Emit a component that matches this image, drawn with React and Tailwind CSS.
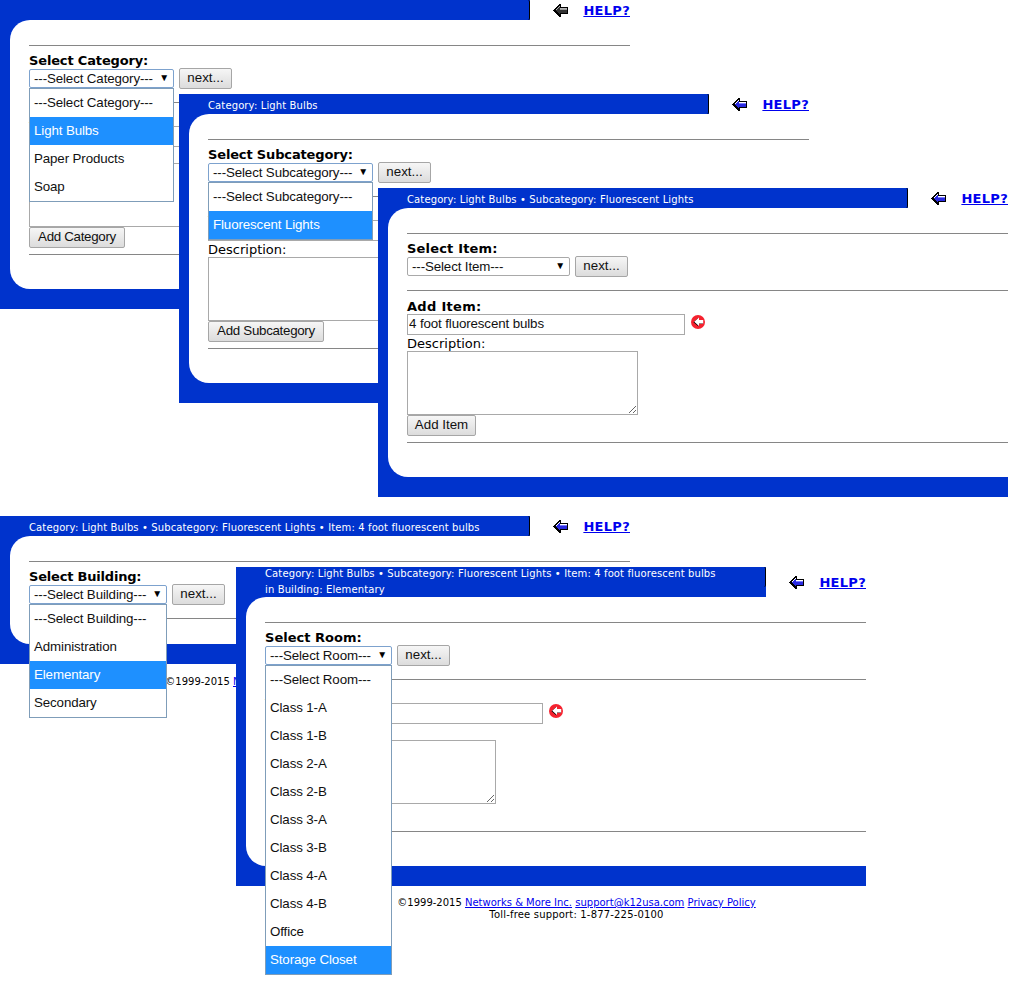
import React from "react";

const SANS = "font-['Liberation_Sans',Arial,sans-serif]";
const VERD = "font-['DejaVu_Sans',Verdana,sans-serif]";

function ArrowIcon({ active = true }) {
  const fill = active ? "#2b2be0" : "#333333";
  const light = active ? "#7a7aff" : "#9a9a9a";
  return (
    <svg width="15" height="13" viewBox="0 0 15 13" shapeRendering="crispEdges" className="shrink-0">
      <path d="M0 6.5 L6.5 0 H8 V3 H15 V10 H8 V13 H6.5 Z" fill="#000" />
      <path d="M1.5 6.5 L6.5 1.5 V4 H14 V5 H6 V3 L3 6 Z" fill="#fff" opacity={active ? 1 : 0.7} />
      <path d="M3 6.5 L6.5 3 V5 H14 V9 H7 V10.5 Z" fill={fill} />
      <path d="M7 5 H14 V6 H7 Z" fill={light} />
    </svg>
  );
}

function RedBack() {
  return (
    <svg width="14" height="14" viewBox="0 0 14 14" className="mt-px shrink-0">
      <circle cx="7" cy="7" r="7" fill="#f5222f" />
      <path d="M2.5 7.2 L7.5 2.8 V5.2 H12 V8.8 H7.5 V11.5 Z" fill="#000" />
      <path d="M3.2 6.8 L8 2.6 V5 H12.2 V8.6 H8 V11 Z" fill="#fff" />
    </svg>
  );
}

function Rule({ className = "" }) {
  return <div className={`h-px bg-[#868686] ${className}`} />;
}

function Btn({ children, className = "" }) {
  return (
    <button
      type="button"
      className={`block h-[21px] rounded-[2px] border border-[#a6a6a6] bg-gradient-to-b from-[#f6f6f6] to-[#dcdcdc] pb-px text-center text-[13.33px] leading-[16px] text-[#111] ${SANS} ${className}`}
    >
      {children}
    </button>
  );
}

function Select({ label, widthClass, options, selected }) {
  const open = Boolean(options);
  return (
    <div className={`relative h-[19px] ${widthClass} ${SANS} text-[13.33px] leading-[17px] tracking-[-0.12px] text-[#111]`}>
      <div
        className={`flex h-full items-center justify-between whitespace-nowrap rounded-[2px] border pb-px pl-[4px] pr-[4px] ${
          open ? "border-[#7da2ce]" : "border-[#a9a9a9]"
        }`}
      >
        <span>{label}</span>
        <span className="text-[10px] leading-none text-black">▼</span>
      </div>
      {open && (
        <ul className="absolute left-0 right-0 top-[19px] z-10 border border-[#7f9db9] bg-white">
          {options.map((o) => (
            <li
              key={o}
              className={`flex h-[28px] items-center whitespace-nowrap pb-[2px] pl-[4px] ${
                o === selected ? "bg-[#1e90ff] text-white" : ""
              }`}
            >
              {o}
            </li>
          ))}
        </ul>
      )}
    </div>
  );
}

function AddForm({ title, value = "", btn, btnClass }) {
  return (
    <>
      <Rule className="mt-[13px]" />
      <div className={`mt-[7px] h-[16px] pt-px text-[13px] font-bold leading-[16px] tracking-[0.3px] text-black ${VERD}`}>
        {title}
      </div>
      <div className="flex items-start gap-[6px]">
        <input
          readOnly
          defaultValue={value}
          className={`h-[21px] w-[278px] border border-[#a9a9a9] px-[1px] pb-[2px] text-[13.33px] tracking-[-0.12px] text-[#111] outline-none ${SANS}`}
        />
        <RedBack />
      </div>
      <div className={`h-[16px] pt-px text-[13px] leading-[16px] text-black ${VERD}`}>Description:</div>
      <textarea readOnly className="block h-[64px] w-[231px] border border-[#a9a9a9] outline-none" />
      <Btn className={btnClass}>{btn}</Btn>
    </>
  );
}

function Footer({ className }) {
  return (
    <div className={`text-center text-[10px] leading-[12px] text-black ${VERD} ${className}`}>
      <div>
        ©1999-2015 <a href="#" className="text-[#0000ee] underline">Networks &amp; More Inc.</a>{" "}
        <a href="#" className="text-[#0000ee] underline">support@k12usa.com</a>{" "}
        <a href="#" className="text-[#0000ee] underline">Privacy Policy</a>
      </div>
      <div className="tracking-[0.18px]">Toll-free support: 1-877-225-0100</div>
    </div>
  );
}

function Win({ pos, crumbs, tall, iconActive = true, label, labelTrack = "tracking-[-0.15px]", select, children, bodyPb = "pb-[34px]", footer }) {
  return (
    <section className={`absolute w-[630px] ${pos}`}>
      <div className={`flex items-center ${tall ? "h-[30px]" : "h-[20px]"}`}>
        <div className="relative h-full w-[531px] bg-[#0033cc] pl-[29px]">
          <div
            className={`h-[16px] text-[10px] leading-[16px] tracking-[0.12px] text-white ${VERD} ${tall ? "-mt-px" : "pt-[4px]"}`}
          >
            {crumbs}
          </div>
          <span className="absolute right-0 top-0 h-[20px] w-[3px] rounded-r-[2px] border-r border-black" />
        </div>
        <div className="ml-[23px]">
          <ArrowIcon active={iconActive} />
        </div>
        <a
          href="#"
          className={`ml-[15px] pt-px text-[13px] font-bold leading-[16px] tracking-[0.3px] text-[#0000ee] underline ${VERD}`}
        >
          HELP?
        </a>
      </div>
      <div className="bg-[#0033cc] pb-[20px] pl-[10px]">
        <div className={`rounded-l-[20px] bg-white pl-[19px] pt-[25px] ${bodyPb}`}>
          <Rule />
          <div className={`mt-[6px] h-[16px] pt-px text-[13px] font-bold leading-[16px] text-black ${labelTrack} ${VERD}`}>
            {label}
          </div>
          <div className="flex h-[21px] items-center gap-[5px]">
            {select}
            <Btn className="w-[53px]">next...</Btn>
          </div>
          {children}
        </div>
      </div>
      {footer}
    </section>
  );
}

export default function App() {
  return (
    <div className="relative h-[988px] w-[1018px] overflow-hidden bg-white">
      <Win
        pos="left-0 top-0"
        iconActive={false}
        crumbs=""
        label="Select Category:"
        select={
          <Select
            label="---Select Category---"
            widthClass="w-[145px]"
            options={["---Select Category---", "Light Bulbs", "Paper Products", "Soap"]}
            selected="Light Bulbs"
          />
        }
      >
        <AddForm title="Add Category:" btn="Add Category" btnClass="w-[96px] tracking-[-0.3px]" />
        <Rule className="mt-[6px]" />
      </Win>

      <Win
        pos="left-[179px] top-[94px]"
        crumbs="Category: Light Bulbs"
        label="Select Subcategory:"
        select={
          <Select
            label="---Select Subcategory---"
            widthClass="w-[165px]"
            options={["---Select Subcategory---", "Fluorescent Lights"]}
            selected="Fluorescent Lights"
          />
        }
      >
        <AddForm title="Add Subcategory:" btn="Add Subcategory" btnClass="w-[116px] tracking-[-0.3px]" />
        <Rule className="mt-[6px]" />
      </Win>

      <Win
        pos="left-[378px] top-[188px]"
        crumbs="Category: Light Bulbs • Subcategory: Fluorescent Lights"
        label="Select Item:"
        labelTrack="tracking-[0.18px]"
        select={<Select label="---Select Item---" widthClass="w-[163px]" />}
      >
        <AddForm title="Add Item:" value="4 foot fluorescent bulbs" btn="Add Item" btnClass="w-[69px]" />
        <Rule className="mt-[6px]" />
      </Win>

      <Win
        pos="left-0 top-[516px]"
        crumbs="Category: Light Bulbs • Subcategory: Fluorescent Lights • Item: 4 foot fluorescent bulbs"
        label="Select Building:"
        labelTrack="tracking-[-0.2px]"
        bodyPb="pb-[25px]"
        select={
          <Select
            label="---Select Building---"
            widthClass="w-[138px]"
            options={["---Select Building---", "Administration", "Elementary", "Secondary"]}
            selected="Elementary"
          />
        }
        footer={<Footer className="pl-[59px] pt-[12px]" />}
      >
        <Rule className="mt-[13px]" />
      </Win>

      <Win
        pos="left-[236px] top-[567px]"
        tall
        crumbs={
          <>
            Category: Light Bulbs • Subcategory: Fluorescent Lights • Item: 4 foot fluorescent bulbs
            <br />
            in Building: Elementary
          </>
        }
        label="Select Room:"
        labelTrack="tracking-[0.02px]"
        select={
          <Select
            label="---Select Room---"
            widthClass="w-[127px]"
            options={[
              "---Select Room---",
              "Class 1-A",
              "Class 1-B",
              "Class 2-A",
              "Class 2-B",
              "Class 3-A",
              "Class 3-B",
              "Class 4-A",
              "Class 4-B",
              "Office",
              "Storage Closet",
            ]}
            selected="Storage Closet"
          />
        }
        footer={<Footer className="pl-[51px] pt-[11px]" />}
      >
        <AddForm title="Add Room:" btn="Add Room" btnClass="w-[76px]" />
        <Rule className="mt-[6px]" />
      </Win>
    </div>
  );
}
